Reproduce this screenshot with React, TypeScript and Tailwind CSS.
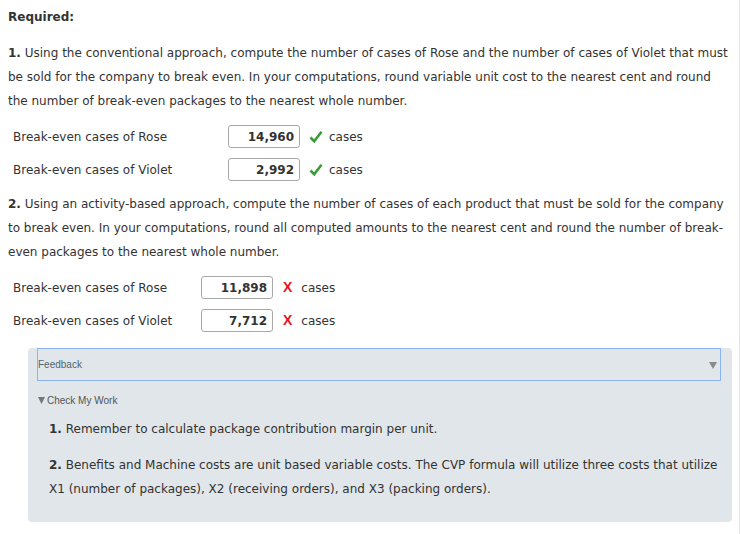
import React from 'react'

const font = { fontFamily: '"DejaVu Sans", Verdana, sans-serif' }
const arial = { fontFamily: 'Arial, "Liberation Sans", sans-serif' }

function Answer({ label, value, ok, labelW }: { label: string; value: string; ok: boolean; labelW: string }) {
  return (
    <div className="flex items-center h-[33px]">
      <div className={`${labelW} pl-[5px]`}>{label}</div>
      <div className="w-[72px] h-[23px] border border-[#a8a8a8] rounded-[3px] flex items-center justify-end pr-[5px] font-bold text-[#333]">
        {value}
      </div>
      {ok ? (
        <svg width="14" height="14" viewBox="0 0 14 14" className="ml-[9px] mr-[6px]">
          <path d="M1.5 7.5 L5.2 11.2 L12.5 1.8" fill="none" stroke="#3a9c35" strokeWidth="2.6" />
        </svg>
      ) : (
        <span className="ml-[10px] mr-[9px] text-[#e8141b] font-bold text-[14px]" style={arial}>X</span>
      )}
      <span>cases</span>
    </div>
  )
}

export default function App() {
  return (
    <div className="w-[740px] h-[534px] bg-white border-r border-[#e6e6e6] text-[#333] text-[12px]" style={font}>
      <div className="pl-[8px] pr-[6px] pt-[8px]">
        <div className="font-bold h-[18px] leading-[18px]">Required:</div>

        <p className="mt-[15px] leading-[24px]">
          <b>1.</b> Using the conventional approach, compute the number of cases of Rose and the number of cases of Violet that must be sold for the company to break even. In your computations, round variable unit cost to the nearest cent and round the number of break-even packages to the nearest whole number.
        </p>
        <div className="mt-[7px]">
          <Answer label="Break-even cases of Rose" value="14,960" ok labelW="w-[220px]" />
          <Answer label="Break-even cases of Violet" value="2,992" ok labelW="w-[220px]" />
        </div>

        <p className="mt-[6px] leading-[24px]">
          <b>2.</b> Using an activity-based approach, compute the number of cases of each product that must be sold for the company to break even. In your computations, round all computed amounts to the nearest cent and round the number of break-even packages to the nearest whole number.
        </p>
        <div className="mt-[7px]">
          <Answer label="Break-even cases of Rose" value="11,898" ok={false} labelW="w-[193px]" />
          <Answer label="Break-even cases of Violet" value="7,712" ok={false} labelW="w-[193px]" />
        </div>
      </div>

      <div className="ml-[28px] mr-[7px] mt-[11px] bg-[#e0e6ea] rounded-[4px] pb-[21px]">
        <div className="ml-[9px] mr-[11px] h-[33px] border border-[#8ab4f0] flex items-center justify-between" style={arial}>
          <span className="text-[10px] text-[#4f6670]">Feedback</span>
          <svg width="8" height="8" viewBox="0 0 8 8" className="mr-[3px]">
            <path d="M0 1 L8 1 L4 8 Z" fill="#8a8a8a" />
          </svg>
        </div>
        <div className="ml-[10px] mt-[12px] flex items-center text-[10px] text-[#555]" style={arial}>
          <svg width="7" height="7" viewBox="0 0 8 8" className="mr-[2px]">
            <path d="M0 0 L8 0 L4 8 Z" fill="#777" />
          </svg>
          Check My Work
        </div>
        <div className="pl-[21px] pr-[10px]">
          <p className="mt-[9px] leading-[24px]">
            <b>1.</b> Remember to calculate package contribution margin per unit.
          </p>
          <p className="mt-[12px] leading-[24px]">
            <b>2.</b> Benefits and Machine costs are unit based variable costs. The CVP formula will utilize three costs that utilize X1 (number of packages), X2 (receiving orders), and X3 (packing orders).
          </p>
        </div>
      </div>
    </div>
  )
}
